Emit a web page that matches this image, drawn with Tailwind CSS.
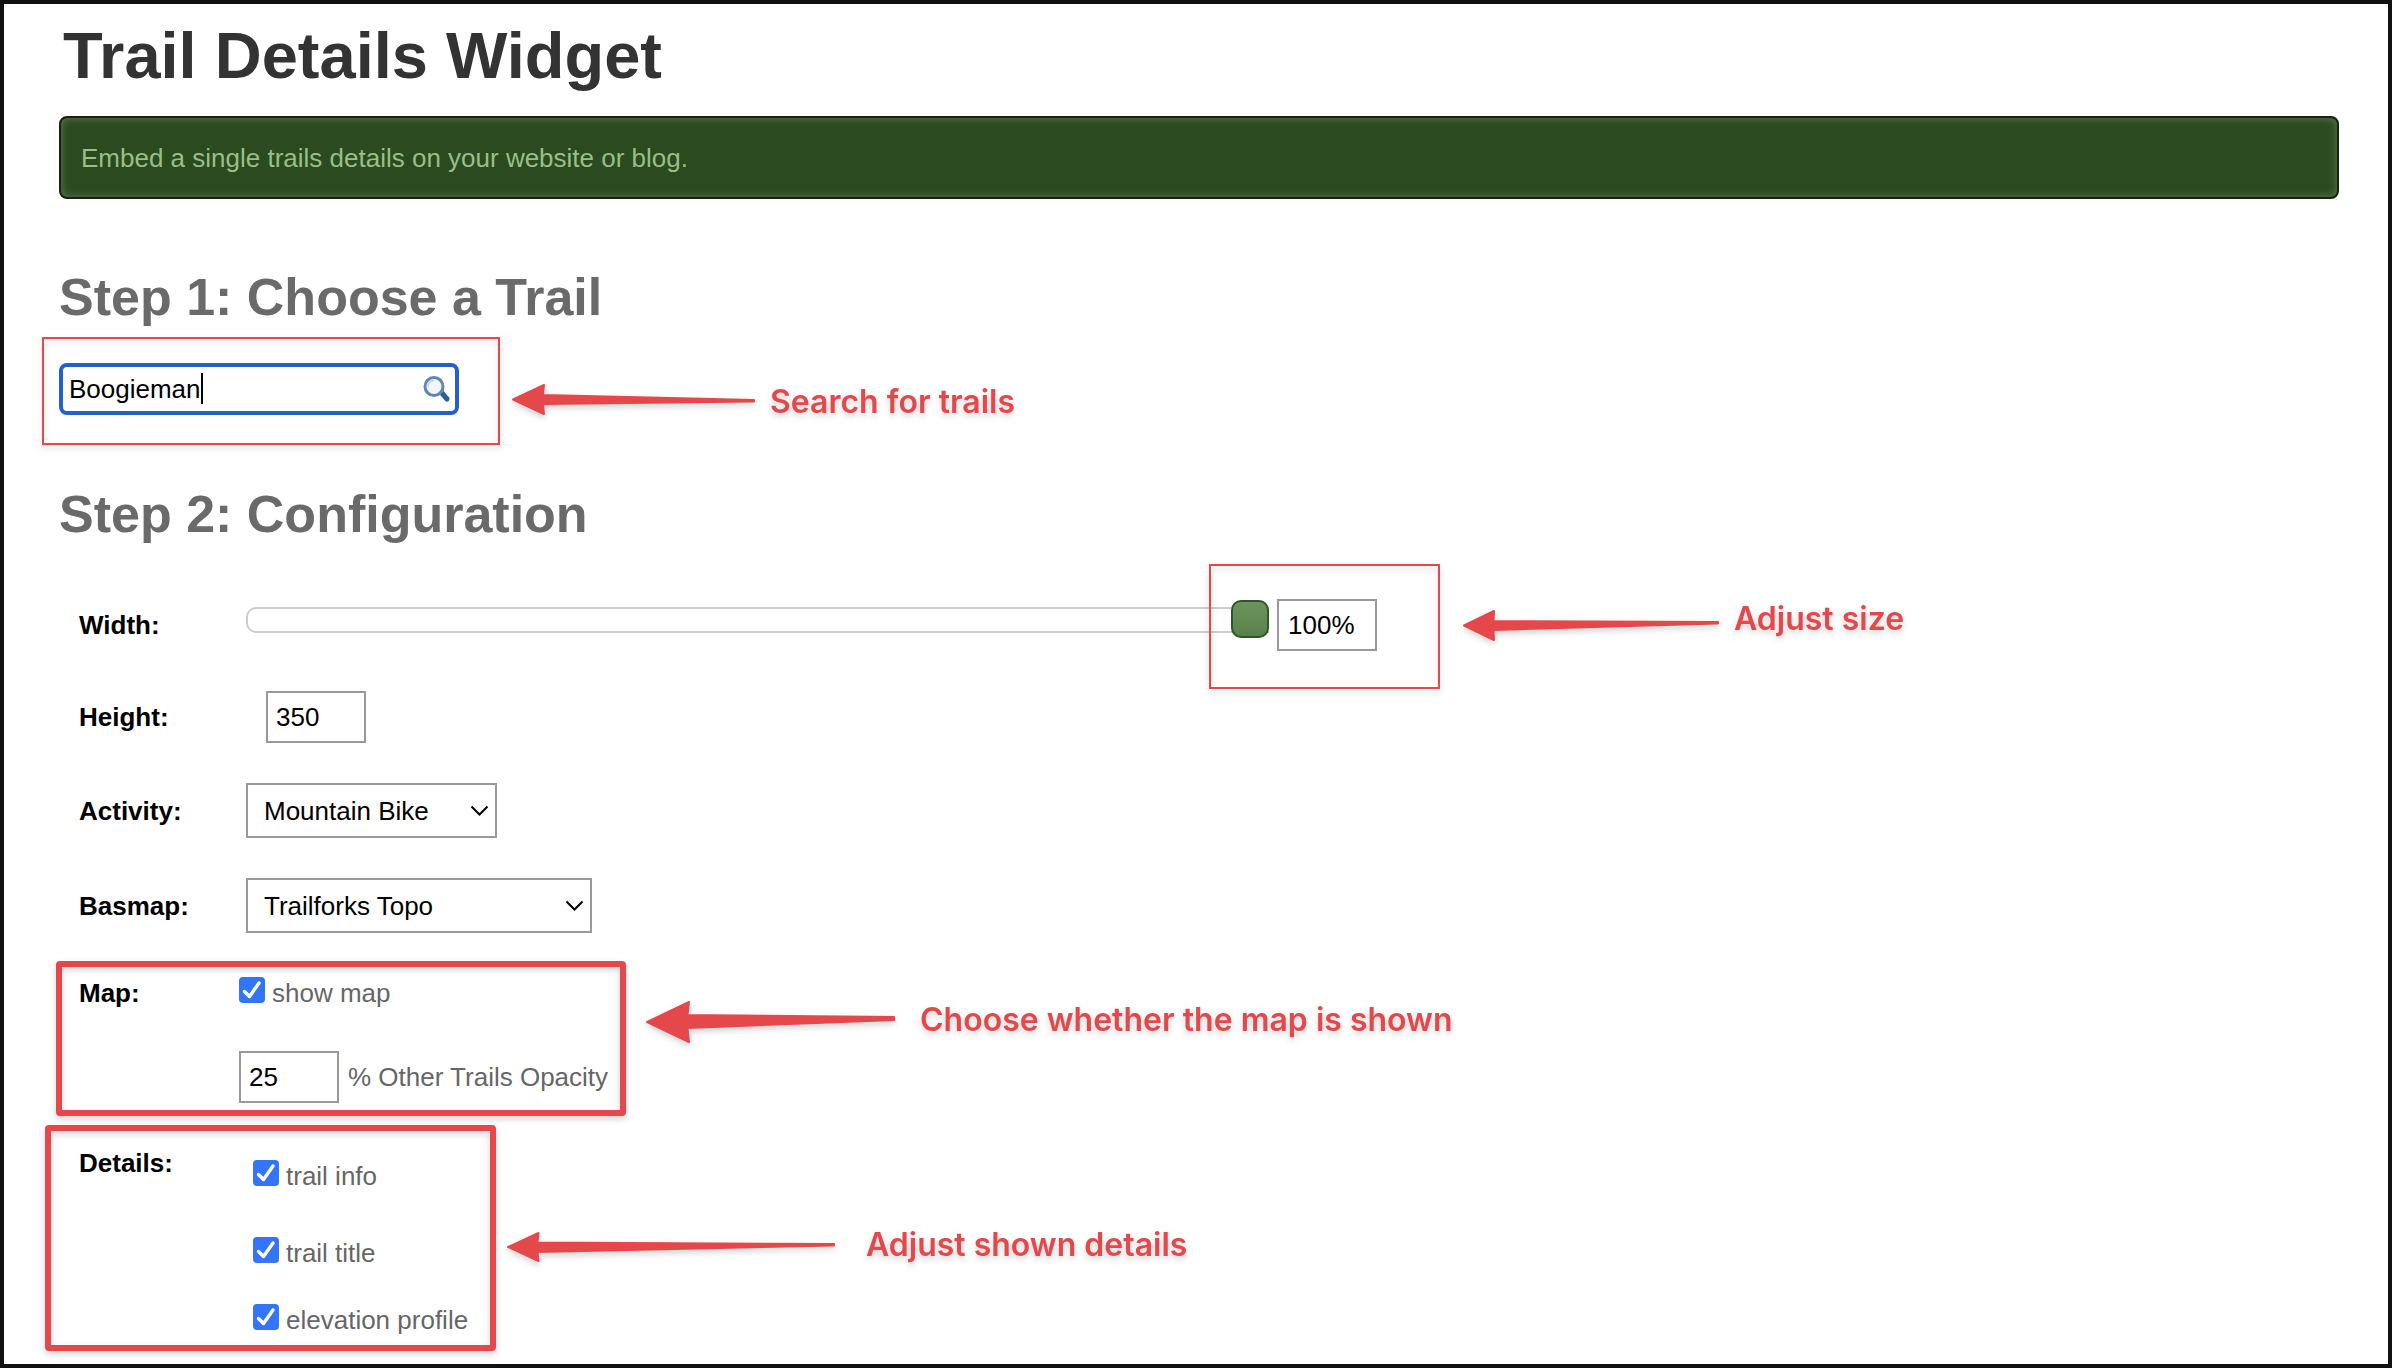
<!DOCTYPE html>
<html lang="en">
<head>
  <meta charset="UTF-8">
  <meta name="viewport" content="width=device-width, initial-scale=1.0">
  <script src="https://cdn.jsdelivr.net/npm/@tailwindcss/browser@4"></script>
  <title>Trail Details Widget</title>
</head>
<body class="bg-white text-[26px] leading-8 text-[#666] font-['Liberation_Sans',Arial,sans-serif]">
  <div class="relative min-h-screen border-4 border-[#111] pl-[55px] pr-[49px]">
    <header class="pt-[14px]">
      <h1 class="pl-1 text-[65px] leading-[76px] font-bold text-[#333]">Trail Details Widget</h1>
      <p class="mt-[22px] flex h-[83px] items-center rounded-lg border-2 border-[#16240f] bg-[#2b4a1f] px-5 text-[#98bf87] shadow-[inset_0_0_10px_rgba(255,255,255,0.25)]">
        Embed a single trails details on your website or blog.
      </p>
    </header>

    <main>
      <h2 class="mt-[68px] text-[52px] leading-[60px] font-bold text-[#6a6a6a]">Step 1: Choose a Trail</h2>
      <div class="relative mt-9 w-[400px]">
        <input type="text" aria-label="Trail" value="Boogieman" class="block h-[52px] w-full rounded-lg border-4 border-[#2560c8] bg-white pl-[6px] pr-12 text-black caret-transparent outline-none">
        <span class="absolute left-[142px] top-[10px] h-[31px] w-[2px] bg-black"></span>
        <svg class="absolute right-2 top-3 size-7" viewBox="0 0 28 28" fill="none">
          <path d="M18 17 L24 24" stroke="#2f5c93" stroke-width="5" stroke-linecap="round" />
          <circle cx="11" cy="11.500" r="9" fill="#f1f6fb" stroke="#5f86b4" stroke-width="3" />
          <path d="M5 11.500 a6 6 0 0 1 6 -6" stroke="#c3d4e8" stroke-width="1.500" />
        </svg>
      </div>

      <h2 class="mt-[69px] text-[52px] leading-[60px] font-bold text-[#6a6a6a]">Step 2: Configuration</h2>
      <form class="mt-[35px] pl-5">
        <div class="flex h-[92px] items-center">
          <label for="width" class="w-40 font-bold text-black">Width:</label>
          <div class="flex items-center gap-2 pl-[7px]">
            <input type="range" id="width" min="0" max="100" value="100" class="mb-[10px] h-[38px] w-[1023px] appearance-none bg-transparent [&::-webkit-slider-runnable-track]:h-[26px] [&::-webkit-slider-runnable-track]:rounded-l-[10px] [&::-webkit-slider-runnable-track]:border-2 [&::-webkit-slider-runnable-track]:border-r-0 [&::-webkit-slider-runnable-track]:border-[#ccc] [&::-webkit-slider-thumb]:mt-[-9px] [&::-webkit-slider-thumb]:h-[38px] [&::-webkit-slider-thumb]:w-[38px] [&::-webkit-slider-thumb]:appearance-none [&::-webkit-slider-thumb]:rounded-[10px] [&::-webkit-slider-thumb]:border-2 [&::-webkit-slider-thumb]:border-[#315526] [&::-webkit-slider-thumb]:bg-linear-to-b [&::-webkit-slider-thumb]:from-[#6f935f] [&::-webkit-slider-thumb]:to-[#58824a]">
            <input type="text" aria-label="Width value" value="100%" class="h-[52px] w-[100px] border-2 border-[#999] px-[9px] text-black">
          </div>
        </div>
        <div class="flex h-[92px] items-center">
          <label for="height" class="w-40 font-bold text-black">Height:</label>
          <div class="pl-[27px]">
            <input type="text" id="height" value="350" class="block h-[52px] w-[100px] border-2 border-[#999] px-2 text-black">
          </div>
        </div>
        <div class="flex h-[95px] items-center">
          <label for="activity" class="w-40 font-bold text-black">Activity:</label>
          <div class="relative ml-[7px]">
            <select id="activity" class="block h-[55px] w-[251px] appearance-none border-2 border-[#999] bg-white pl-4 text-black">
              <option>Mountain Bike</option>
            </select>
            <svg class="pointer-events-none absolute right-2 top-[22px] h-[11px] w-[19px]" viewBox="0 0 19 11" fill="none" stroke="#000" stroke-width="2">
              <path d="M1.500 1.500 L9.500 9.500 L17.500 1.500" />
            </svg>
          </div>
        </div>
        <div class="flex h-[95px] items-center">
          <label for="basemap" class="w-40 font-bold text-black">Basmap:</label>
          <div class="relative ml-[7px]">
            <select id="basemap" class="block h-[55px] w-[346px] appearance-none border-2 border-[#999] bg-white pl-4 text-black">
              <option>Trailforks Topo</option>
            </select>
            <svg class="pointer-events-none absolute right-2 top-[22px] h-[11px] w-[19px]" viewBox="0 0 19 11" fill="none" stroke="#000" stroke-width="2">
              <path d="M1.500 1.500 L9.500 9.500 L17.500 1.500" />
            </svg>
          </div>
        </div>
        <div class="flex pt-6">
          <span class="w-40 font-bold text-black">Map:</span>
          <div>
            <label class="flex gap-[7px]">
              <span class="grid h-[26px]">
                <input type="checkbox" checked class="col-start-1 row-start-1 size-[26px] appearance-none rounded-[4px] bg-[#3275f6]">
                <svg class="pointer-events-none col-start-1 row-start-1 size-[26px]" viewBox="0 0 26 26" fill="none" stroke="#fff" stroke-width="3.400" stroke-linecap="round" stroke-linejoin="round">
                  <path d="M5.500 14.500 L10.500 19.500 L20 6" />
                </svg>
              </span>
              <span>show map</span>
            </label>
            <label class="mt-[42px] flex items-center gap-[9px]">
              <input type="text" value="25" class="h-[52px] w-[100px] border-2 border-[#999] px-2 text-black">
              <span>% Other Trails Opacity</span>
            </label>
          </div>
        </div>
        <div class="flex pt-11">
          <span class="w-40 font-bold text-black">Details:</span>
          <div class="flex flex-col pl-[14px] pt-[13px]">
            <label class="flex h-[77px] gap-[7px]">
              <span class="grid h-[26px]">
                <input type="checkbox" checked class="col-start-1 row-start-1 size-[26px] appearance-none rounded-[4px] bg-[#3275f6]">
                <svg class="pointer-events-none col-start-1 row-start-1 size-[26px]" viewBox="0 0 26 26" fill="none" stroke="#fff" stroke-width="3.400" stroke-linecap="round" stroke-linejoin="round">
                  <path d="M5.500 14.500 L10.500 19.500 L20 6" />
                </svg>
              </span>
              <span>trail info</span>
            </label>
            <label class="flex h-[67px] gap-[7px]">
              <span class="grid h-[26px]">
                <input type="checkbox" checked class="col-start-1 row-start-1 size-[26px] appearance-none rounded-[4px] bg-[#3275f6]">
                <svg class="pointer-events-none col-start-1 row-start-1 size-[26px]" viewBox="0 0 26 26" fill="none" stroke="#fff" stroke-width="3.400" stroke-linecap="round" stroke-linejoin="round">
                  <path d="M5.500 14.500 L10.500 19.500 L20 6" />
                </svg>
              </span>
              <span>trail title</span>
            </label>
            <label class="flex gap-[7px]">
              <span class="grid h-[26px]">
                <input type="checkbox" checked class="col-start-1 row-start-1 size-[26px] appearance-none rounded-[4px] bg-[#3275f6]">
                <svg class="pointer-events-none col-start-1 row-start-1 size-[26px]" viewBox="0 0 26 26" fill="none" stroke="#fff" stroke-width="3.400" stroke-linecap="round" stroke-linejoin="round">
                  <path d="M5.500 14.500 L10.500 19.500 L20 6" />
                </svg>
              </span>
              <span>elevation profile</span>
            </label>
          </div>
        </div>
      </form>
    </main>

    <!-- callouts drawn over the page -->
    <div class="pointer-events-none absolute -left-1 -top-1 text-[32px] leading-10 font-semibold whitespace-nowrap text-[#e5484b] font-[Inter,sans-serif] drop-shadow-[0_3px_3px_rgba(0,0,0,0.18)]">
      <div class="absolute left-[42px] top-[337px] h-[108px] w-[458px] border-2 border-[#e5484b]"></div>
      <div class="absolute left-[1209px] top-[564px] h-[125px] w-[231px] border-2 border-[#e5484b]"></div>
      <div class="absolute left-[56px] top-[961px] h-[155px] w-[570px] rounded-[4px] border-6 border-[#e5484b]"></div>
      <div class="absolute left-[45px] top-[1125px] h-[226px] w-[451px] rounded-[4px] border-6 border-[#e5484b]"></div>
      <svg class="absolute left-0 top-0 h-[1368px] w-[1800px]" viewBox="0 0 1800 1368" fill="#e5484b" stroke="#e5484b" stroke-width="2" stroke-linejoin="round">
        <path d="M513 399.500 L544 385 L543 395 L754 400 L754 401.500 L543 404 L544 414 Z" />
        <path d="M1464 625.500 L1494 611 L1493.500 621 L1718 622 L1718 623.500 L1493.500 630 L1494 640 Z" />
        <path d="M647 1022 L689 1002 L687.500 1015 L894 1017 L894 1020 L687.500 1028 L689 1042 Z" />
        <path d="M508 1247 L538.500 1233 L537.500 1242.500 L834 1244 L834 1245.500 L537.500 1252 L538.500 1261 Z" />
      </svg>
      <p class="absolute left-[770px] top-[382px]">Search for trails</p>
      <p class="absolute left-[1734px] top-[599px]">Adjust size</p>
      <p class="absolute left-[920px] top-[1000px]">Choose whether the map is shown</p>
      <p class="absolute left-[866px] top-[1225px]">Adjust shown details</p>
    </div>
  </div>
</body>
</html>
